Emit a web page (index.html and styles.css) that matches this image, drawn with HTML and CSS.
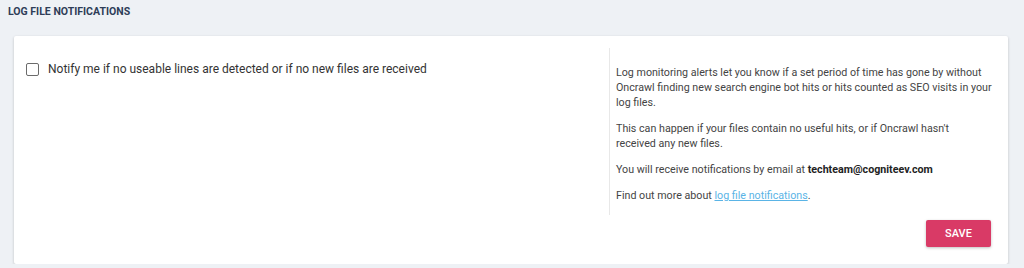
FILE: index.html
```html
<!DOCTYPE html>
<html lang="en">
<head>
    <meta charset="UTF-8">
    <meta name="viewport" content="width=device-width, initial-scale=1.0">
    <title>Log file notifications</title>
    <link rel="stylesheet" href="styles.css">
</head>
<body>

    <h2 class="section-title">Log file notifications</h2>

    <!-- Notifications card -->
    <div class="card">
        <div class="card-row">
            <div class="left-col">
                <label class="check">
                    <span class="check-box"></span>
                    <span class="check-label">Notify me if no useable lines are detected or if no new files are received</span>
                </label>
            </div>
            <div class="help-col">
                <p>Log monitoring alerts let you know if a set period of time has gone by without Oncrawl finding new search engine bot hits or hits counted as SEO visits in your log files.</p>
                <p>This can happen if your files contain no useful hits, or if Oncrawl hasn't<br>received any new files.</p>
                <p>You will receive notifications by email at <strong>techteam@cogniteev.com</strong></p>
                <p>Find out more about <a href="#">log file notifications</a>.</p>
            </div>
        </div>
        <div class="card-footer">
            <button class="save-btn">Save</button>
        </div>
    </div>

</body>
</html>
```

FILE: styles.css
```css
body {
    background-color: #eef1f5;
    font-family: Roboto, 'Liberation Sans', sans-serif;
    color: #333;
    margin: 0;
    padding: 0;
}
.section-title {
    margin: 0;
    padding: 6px 8px 0 8px;
    height: 30px;
    font-size: 10.5px;
    font-weight: bold;
    text-transform: uppercase;
    color: #2e3d58;
    line-height: 12px;
}
.card {
    margin: 0 16px 0 14px;
    background-color: white;
    padding: 12px 12px 16px 12px;
    box-shadow: 0 1px 3px rgba(0, 0, 0, 0.2);
    border-radius: 2px;
    height: 200px;
}
.card-row {
    display: flex;
}
.left-col {
    flex: 1;
    padding-top: 14px;
}
.check {
    display: flex;
    align-items: center;
    gap: 9px;
}
.check-box {
    width: 11px;
    height: 11px;
    border: 1.5px solid #6b6b6b;
    border-radius: 2px;
}
.check-label {
    font-size: 12px;
    color: #333;
}
.help-col {
    width: 380px;
    border-left: 1px solid #e8e8e8;
    padding: 17px 0 12px 6px;
    font-size: 10.7px;
    line-height: 15px;
    color: #444;
}
.help-col p {
    margin: 0 0 11px 0;
}
.help-col p:last-child {
    margin-bottom: 0;
}
.help-col strong {
    color: #222;
}
.help-col a {
    color: #5ab4e6;
}
.card-footer {
    display: flex;
    justify-content: flex-end;
    margin-top: 5px;
    padding-right: 5px;
}
.save-btn {
    width: 65px;
    height: 27px;
    background-color: #d93a66;
    color: white;
    border: none;
    border-radius: 2px;
    font-family: Roboto, 'Liberation Sans', sans-serif;
    font-size: 11px;
    font-weight: 500;
    text-transform: uppercase;
    box-shadow: 0 1px 3px rgba(0, 0, 0, 0.25);
    cursor: pointer;
}
```
